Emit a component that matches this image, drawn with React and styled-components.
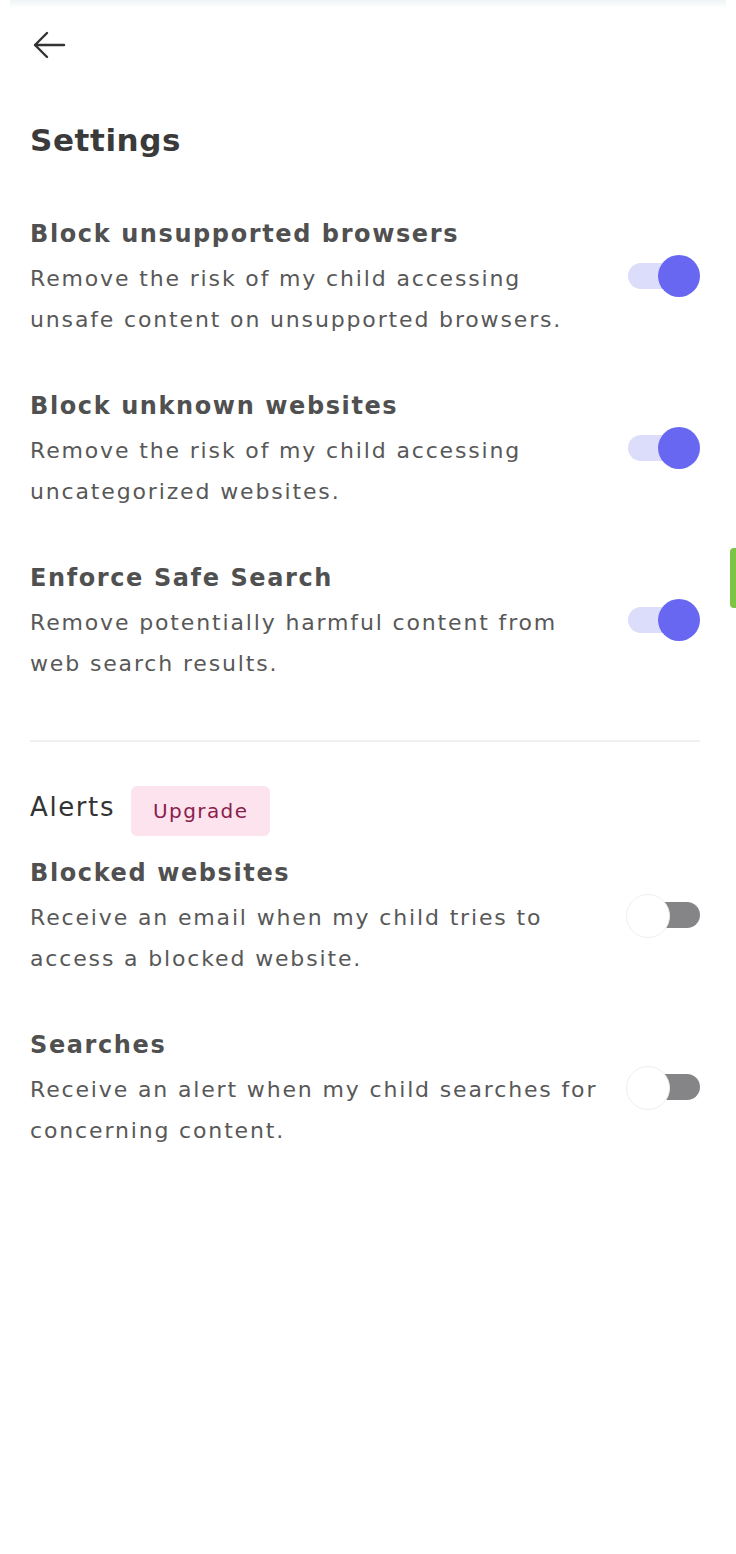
import styled, { createGlobalStyle } from "styled-components";

const GlobalStyle = createGlobalStyle`
  * { box-sizing: border-box; }
  body {
    margin: 0;
    background: #fff;
    font-family: "DejaVu Sans", "Open Sans", sans-serif;
  }
`;

const settings = [
  {
    title: "Block unsupported browsers",
    lines: ["Remove the risk of my child accessing", "unsafe content on unsupported browsers."],
    on: true,
  },
  {
    title: "Block unknown websites",
    lines: ["Remove the risk of my child accessing", "uncategorized websites."],
    on: true,
  },
  {
    title: "Enforce Safe Search",
    lines: ["Remove potentially harmful content from", "web search results."],
    on: true,
  },
];

const alerts = [
  {
    title: "Blocked websites",
    lines: ["Receive an email when my child tries to", "access a blocked website."],
    on: false,
  },
  {
    title: "Searches",
    lines: ["Receive an alert when my child searches for", "concerning content."],
    on: false,
  },
];

const SettingRow = ({ item }) => (
  <Row>
    <RowText>
      <RowTitle>{item.title}</RowTitle>
      <RowDesc>
        {item.lines.map((l) => (
          <DescLine key={l}>{l}</DescLine>
        ))}
      </RowDesc>
    </RowText>
    <Toggle $on={item.on} role="switch" aria-checked={item.on} />
  </Row>
);

const App = () => {
  return (
    <Screen>
      <GlobalStyle />
      <TopGlow />
      <SideTab />
      <Header>
        <BackButton aria-label="Back">
          <svg width="34" height="30" viewBox="0 0 34 30" fill="none">
            <path
              d="M32 15H3M15 3L3 15l12 12"
              stroke="#333"
              strokeWidth="2.4"
              strokeLinecap="round"
              strokeLinejoin="round"
            />
          </svg>
        </BackButton>
      </Header>
      <Title>Settings</Title>
      <List>
        {settings.map((s) => (
          <SettingRow key={s.title} item={s} />
        ))}
      </List>
      <Divider />
      <AlertsHead>
        <SectionLabel>Alerts</SectionLabel>
        <Badge>Upgrade</Badge>
      </AlertsHead>
      <List $tight>
        {alerts.map((s) => (
          <SettingRow key={s.title} item={s} />
        ))}
      </List>
    </Screen>
  );
};

export default App;

const Screen = styled.main`
  position: relative;
  min-height: 1554px;
  padding: 0 36px 0 30px;
  color: #3d3d3d;
  overflow: hidden;
`;

const TopGlow = styled.div`
  position: absolute;
  top: 0;
  left: 10px;
  right: 10px;
  height: 8px;
  background: linear-gradient(to bottom, #eef4f6, #fff);
`;

const SideTab = styled.div`
  position: absolute;
  right: 0;
  top: 548px;
  width: 6px;
  height: 60px;
  border-radius: 4px 0 0 4px;
  background: #7cc443;
`;

const Header = styled.header`
  height: 90px;
  display: flex;
  align-items: center;
`;

const BackButton = styled.button`
  border: none;
  background: none;
  padding: 0;
  margin-left: 2px;
  display: flex;
  cursor: pointer;
`;

const Title = styled.h1`
  margin: 28px 0 0;
  font-size: 31px;
  line-height: 44px;
  font-weight: 700;
  letter-spacing: 0.6px;
  color: #3a3a3a;
`;

const List = styled.div`
  display: flex;
  flex-direction: column;
  gap: 46px;
  margin-top: ${(p) => (p.$tight ? "17px" : "52px")};
`;

const Row = styled.div`
  display: flex;
  align-items: center;
  justify-content: space-between;
  gap: 20px;
`;

const RowText = styled.div`
  display: flex;
  flex-direction: column;
`;

const RowTitle = styled.h2`
  margin: 0;
  font-size: 24px;
  line-height: 40px;
  font-weight: 700;
  letter-spacing: 1.6px;
  color: #505050;
`;

const RowDesc = styled.p`
  margin: 4px 0 0;
  font-size: 22px;
  line-height: 41px;
  font-weight: 400;
  letter-spacing: 1.85px;
  color: #585858;
`;

const DescLine = styled.span`
  display: block;
  white-space: nowrap;
`;

const Toggle = styled.div`
  position: relative;
  flex: none;
  width: 74px;
  height: 42px;
  margin-top: -2px;
  &::before {
    content: "";
    position: absolute;
    top: 8px;
    height: 26px;
    border-radius: 13px;
    left: ${(p) => (p.$on ? "2px" : "22px")};
    right: ${(p) => (p.$on ? "20px" : "0")};
    background: ${(p) => (p.$on ? "#dcdcfb" : "#858588")};
  }
  &::after {
    content: "";
    position: absolute;
    top: 0;
    width: 42px;
    height: 42px;
    border-radius: 50%;
    left: ${(p) => (p.$on ? "32px" : "0")};
    background: ${(p) => (p.$on ? "#6767f1" : "#fff")};
    border: ${(p) => (p.$on ? "none" : "1.5px solid #eeeeee")};
  }
`;

const Divider = styled.hr`
  border: none;
  height: 2px;
  background: #f0f0f0;
  margin: 56px 0 0;
`;

const AlertsHead = styled.div`
  display: flex;
  align-items: flex-start;
  gap: 16px;
  margin-top: 45px;
`;

const SectionLabel = styled.h3`
  margin: 0;
  font-size: 26px;
  line-height: 40px;
  font-weight: 400;
  letter-spacing: 1.6px;
  color: #333;
`;

const Badge = styled.span`
  display: inline-flex;
  align-items: center;
  height: 50px;
  margin-top: -1px;
  padding: 0 22px;
  border-radius: 6px;
  background: #fce3ee;
  color: #8a1d4c;
  font-size: 20px;
  font-weight: 400;
  letter-spacing: 1.4px;
`;
